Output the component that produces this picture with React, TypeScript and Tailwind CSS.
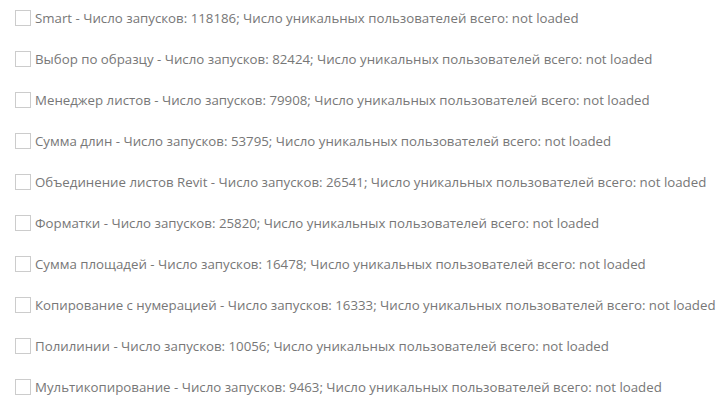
import React from "react";

const items: [string, number][] = [
  ["Smart", 118186],
  ["Выбор по образцу", 82424],
  ["Менеджер листов", 79908],
  ["Сумма длин", 53795],
  ["Объединение листов Revit", 26541],
  ["Форматки", 25820],
  ["Сумма площадей", 16478],
  ["Копирование с нумерацией", 16333],
  ["Полилинии", 10056],
  ["Мультикопирование", 9463],
];

export default function App() {
  return (
    <div className="w-[728px] h-[407px] bg-white overflow-hidden flex flex-col pt-[10px] pl-[15px] gap-[25px] font-['Open_Sans',sans-serif] text-[13.27px] text-[#777777]">
      {items.map(([name, n]) => (
        <label key={name} className="flex items-center h-[16px] gap-[4px] whitespace-nowrap">
          <span className="w-[16px] h-[16px] border border-[#cccccc] bg-white shrink-0" />
          <span className="leading-[16px]">
            {name} - Число запусков: {n}; Число уникальных пользователей всего: not loaded
          </span>
        </label>
      ))}
    </div>
  );
}
